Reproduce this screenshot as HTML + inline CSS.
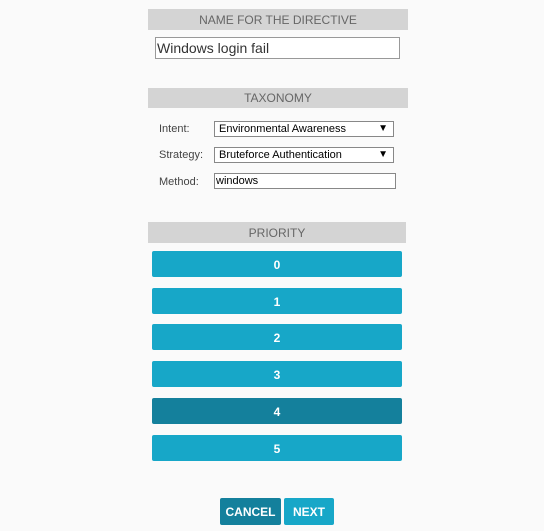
<!DOCTYPE html>
<html><head><style>
body{margin:0;width:544px;height:531px;background:#fafafa;font-family:"Liberation Sans",sans-serif;position:relative;overflow:hidden}
.a{position:absolute}
.h{background:#d4d4d4;color:#666;font-size:12px;text-align:center;line-height:21px}
.lbl{font-size:11px;color:#444}
.sel{border:1px solid #888;background:#fff;font-size:11px;color:#000;line-height:14px;padding-left:4px;box-sizing:border-box}
.sel span{position:absolute;right:5px;top:0;font-size:10px}
.b{left:152px;width:250px;height:26px;background:#17a7c8;color:#fff;font-weight:bold;font-size:12px;text-align:center;line-height:28px;border-radius:2px}
</style></head><body>
<div class="a h" style="left:148px;top:9px;width:260px;height:21px;line-height:22px">NAME FOR THE DIRECTIVE</div>
<div class="a" style="left:155px;top:37px;width:245px;height:22px;border:1px solid #999;box-sizing:border-box;background:#fff;font-size:14px;color:#333;line-height:20px;padding-left:1px">Windows login fail</div>
<div class="a h" style="left:148px;top:88px;width:260px;height:20px;line-height:21px">TAXONOMY</div>
<div class="a lbl" style="left:159px;top:123px">Intent:</div>
<div class="a sel" style="left:214px;top:121px;width:180px;height:16px">Environmental Awareness<span>▼</span></div>
<div class="a lbl" style="left:159px;top:149px">Strategy:</div>
<div class="a sel" style="left:214px;top:147px;width:180px;height:16px">Bruteforce Authentication<span>▼</span></div>
<div class="a lbl" style="left:159px;top:176px">Method:</div>
<div class="a sel" style="left:214px;top:173px;width:182px;height:16px;padding-left:1px">windows</div>
<div class="a h" style="left:148px;top:222px;width:258px;height:21px;line-height:22px">PRIORITY</div>
<div class="a b" style="top:251px">0</div>
<div class="a b" style="top:288px">1</div>
<div class="a b" style="top:324px">2</div>
<div class="a b" style="top:361px">3</div>
<div class="a b" style="top:398px;background:#14809c">4</div>
<div class="a b" style="top:435px">5</div>
<div class="a b" style="left:220px;width:61px;top:498px;height:27px;line-height:28px;background:#14809c">CANCEL</div>
<div class="a b" style="left:284px;width:50px;top:498px;height:27px;line-height:28px">NEXT</div>
</body></html>
